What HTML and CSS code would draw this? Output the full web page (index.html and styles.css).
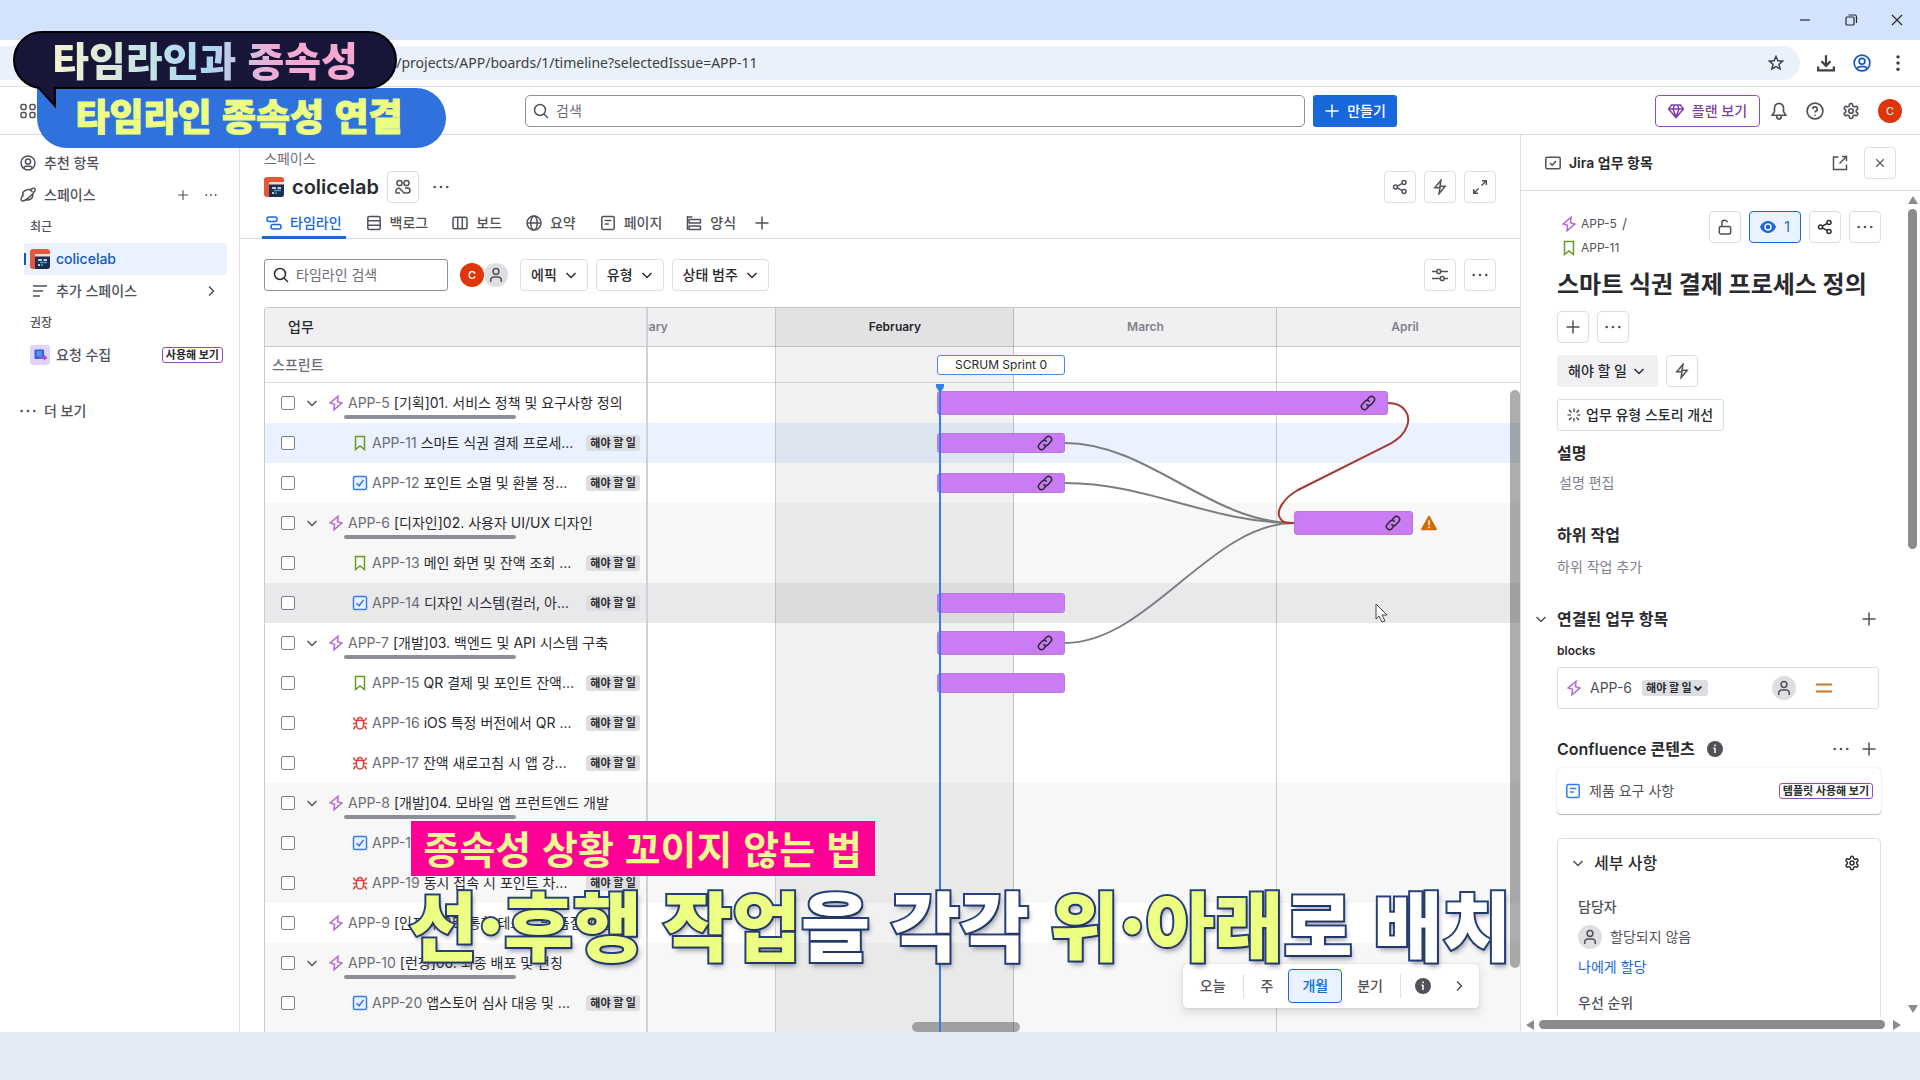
FILE: index.html
```html
<!DOCTYPE html>
<html lang="ko">

<head>
  <meta charset="UTF-8">
  <title>타임라인 - colicelab</title>
  <link rel="stylesheet" href="styles.css">
</head>

<body>
  <!-- icon sprite -->
  <svg class="sprite" aria-hidden="true">
    <symbol id="i-apps" viewBox="0 0 16 16"><rect x="1" y="1.500" width="5" height="5" rx="1.500"/><rect x="10" y="1.500" width="5" height="5" rx="1.500"/><rect x="1" y="9.500" width="5" height="5" rx="1.500"/><rect x="10" y="9.500" width="5" height="5" rx="1.500"/></symbol>
    <symbol id="i-search" viewBox="0 0 16 16"><circle cx="7" cy="7" r="5.500"/><path d="M11 11l4 4"/></symbol>
    <symbol id="i-plus" viewBox="0 0 16 16"><path d="M8 1.500v13M1.500 8h13"/></symbol>
    <symbol id="i-more" viewBox="0 0 16 16"><g fill="currentColor" stroke="none"><circle cx="1.700" cy="8" r="1.300"/><circle cx="8" cy="8" r="1.300"/><circle cx="14.300" cy="8" r="1.300"/></g></symbol>
    <symbol id="i-down" viewBox="0 0 16 16"><path d="M3.500 6L8 10.500 12.500 6"/></symbol>
    <symbol id="i-right" viewBox="0 0 16 16"><path d="M6 3.500L10.500 8 6 12.500"/></symbol>
    <symbol id="i-close" viewBox="0 0 16 16"><path d="M3 3l10 10M13 3L3 13"/></symbol>
    <symbol id="i-bolt" viewBox="0 0 16 16"><path d="M10 1.200L2.200 8l4.300 1.200-.5 5.600L13.800 8 9.500 6.800z"/></symbol>
    <symbol id="i-auto" viewBox="0 0 16 16"><path d="M9 1.200L2.800 8.800H8L7 14.800l6.200-7.600H8z"/></symbol>
    <symbol id="i-story" viewBox="0 0 16 16"><path d="M3.500 1.500h9v13L8 11l-4.500 3.500z"/></symbol>
    <symbol id="i-task" viewBox="0 0 16 16"><rect x="1.500" y="1.500" width="13" height="13" rx="1.500" fill="#e9f2fe"/><path d="M4.500 8.300L7 10.800 11.500 5"/></symbol>
    <symbol id="i-bug" viewBox="0 0 16 16"><path d="M4.500 5.500h7V10a3.500 4 0 0 1-7 0zM5.500 5.500a2.500 3 0 0 1 5 0M1 8.500h3.500M11.500 8.500H15M1.500 2.500l1 2 2 1.500M14.500 2.500l-1 2-2 1.500M1.500 14.500l1-2.500 2.200-1M14.500 14.500l-1-2.500-2.200-1"/></symbol>
    <symbol id="i-link" viewBox="0 0 24 24"><path stroke-width="2.200" d="M9.500 14a5 5 0 0 0 7 .5l4-4.500a4.500 4.500 0 0 0-6.500-6.500L10.500 7.500M14.500 10a5 5 0 0 0-7-.5l-4 4.500a4.500 4.500 0 0 0 6.500 6.500l3.500-4"/></symbol>
    <symbol id="i-user" viewBox="0 0 16 16"><circle cx="8" cy="4.500" r="2.900"/><path d="M2.700 15v-2a3 3 0 0 1 3-3h4.600a3 3 0 0 1 3 3v2"/></symbol>
    <symbol id="i-account" viewBox="0 0 16 16"><circle cx="8" cy="8" r="7"/><circle cx="8" cy="6.500" r="2.600"/><path d="M3.500 13a3 3 0 0 1 2.500-1.800h4a3 3 0 0 1 2.500 1.800"/></symbol>
    <symbol id="i-planet" viewBox="0 0 16 16"><path d="M3 9.500a5.300 5.300 0 0 1 9.500-4.500M13 7.500a5.300 5.300 0 0 1-7.500 5M3.500 7.500C1.500 10 .5 12.500 1.500 13.500 3 15 7.500 12 11 8.500S16 2.500 14.800 1.500c-.8-.8-2.600 0-4.300 1"/></symbol>
    <symbol id="i-lines" viewBox="0 0 16 16"><path d="M1 3h14M1 8h10M1 13h7"/></symbol>
    <symbol id="i-people" viewBox="0 0 16 16"><circle cx="4.500" cy="4" r="2.600"/><circle cx="11.500" cy="4" r="2.600"/><path d="M1 14V11.500a2.500 2.500 0 0 1 4.500-1.200L9 14h3.500a2.500 2.500 0 0 0 0-5H10M1 14h4"/></symbol>
    <symbol id="i-timeline" viewBox="0 0 16 16"><rect x="1" y="2" width="10" height="4.500" rx="2"/><rect x="5" y="9.500" width="10" height="4.500" rx="2"/></symbol>
    <symbol id="i-backlog" viewBox="0 0 16 16"><rect x="1.800" y="1.500" width="12.400" height="13" rx="1.500"/><path d="M2 5.800h12M2 10.200h12"/></symbol>
    <symbol id="i-board" viewBox="0 0 16 16"><rect x="1" y="2.200" width="14" height="11.600" rx="1.500"/><path d="M5.700 2.500v11M10.300 2.500v11"/></symbol>
    <symbol id="i-globe" viewBox="0 0 16 16"><circle cx="8" cy="8" r="7"/><ellipse cx="8" cy="8" rx="3.200" ry="7"/><path d="M1 8h14"/></symbol>
    <symbol id="i-page" viewBox="0 0 16 16"><rect x="1.800" y="1.500" width="12.400" height="13" rx="1.500"/><path d="M4.800 5.500h6.500M4.800 9h4"/></symbol>
    <symbol id="i-form" viewBox="0 0 16 16"><path d="M1.500 1v14M1.500 2h5"/><rect x="3" y="4.500" width="11.500" height="3.500" rx=".5"/><rect x="3" y="11" width="11.500" height="3.500" rx=".5"/></symbol>
    <symbol id="i-share" viewBox="0 0 16 16"><circle cx="3.500" cy="8" r="2"/><circle cx="12" cy="3.500" r="2"/><circle cx="12" cy="12.500" r="2"/><path d="M5.300 7.100l5-2.700M5.300 8.900l5 2.700"/></symbol>
    <symbol id="i-expand" viewBox="0 0 16 16"><path d="M9.500 6.500L14 2M10 1.700h4.300V6M6.500 9.500L2 14M1.700 10v4.300H6"/></symbol>
    <symbol id="i-sliders" viewBox="0 0 16 16"><path d="M0 4.500h5M9 4.500h7M0 11.500h8M12 11.500h4"/><rect x="5" y="2.500" width="3.500" height="4" rx="1"/><rect x="8.500" y="9.500" width="3.500" height="4" rx="1"/></symbol>
    <symbol id="i-gem" viewBox="0 0 16 16"><path d="M3.500 2h9L15.500 6 8 14.500.5 6zM.5 6h15M5 6l3 8M11 6l-3 8M5 6l1.500-4M11 6L9.500 2"/></symbol>
    <symbol id="i-bell" viewBox="0 0 16 16"><path d="M8 1.200a4 4 0 0 1 4 4V8.500l2 3.300H2L4 8.500V5.200a4 4 0 0 1 4-4zM6 12v1a2 2 0 0 0 4 0v-1"/></symbol>
    <symbol id="i-help" viewBox="0 0 16 16"><circle cx="8" cy="8" r="7"/><path d="M6 6.300a2 2 0 1 1 2.800 1.800c-.6.300-.8.600-.8 1.300M8 11v1.300"/></symbol>
    <symbol id="i-gear" viewBox="0 0 24 24"><path stroke-width="2.200" d="M12.220 2h-.44a2 2 0 0 0-2 2v.18a2 2 0 0 1-1 1.730l-.43.25a2 2 0 0 1-2 0l-.15-.08a2 2 0 0 0-2.730.73l-.22.38a2 2 0 0 0 .73 2.730l.15.1a2 2 0 0 1 1 1.720v.51a2 2 0 0 1-1 1.740l-.15.09a2 2 0 0 0-.73 2.730l.22.38a2 2 0 0 0 2.730.73l.15-.08a2 2 0 0 1 2 0l.43.25a2 2 0 0 1 1 1.730V20a2 2 0 0 0 2 2h.44a2 2 0 0 0 2-2v-.18a2 2 0 0 1 1-1.730l.43-.25a2 2 0 0 1 2 0l.15.08a2 2 0 0 0 2.730-.73l.22-.39a2 2 0 0 0-.73-2.730l-.15-.08a2 2 0 0 1-1-1.740v-.5a2 2 0 0 1 1-1.740l.15-.09a2 2 0 0 0 .73-2.730l-.22-.38a2 2 0 0 0-2.730-.73l-.15.08a2 2 0 0 1-2 0l-.43-.25a2 2 0 0 1-1-1.730V4a2 2 0 0 0-2-2z"/><circle cx="12" cy="12" r="3" stroke-width="2.200"/></symbol>
    <symbol id="i-item" viewBox="0 0 16 16"><rect x=".8" y="2.200" width="14.400" height="11.600" rx="1.500"/><path d="M5 8l2.200 2.200L11 6"/></symbol>
    <symbol id="i-external" viewBox="0 0 16 16"><path d="M6.500 2h-5v12.500h13v-5M10 1.500h4.500V6M14.500 1.500L7.500 8.500"/></symbol>
    <symbol id="i-lock" viewBox="0 0 16 16"><rect x="2.300" y="7.500" width="11.400" height="7.500" rx="1.500"/><path d="M4.800 7.500V4a2.900 2.900 0 0 1 5.700-.7"/></symbol>
    <symbol id="i-eye" viewBox="0 0 16 16"><path fill="currentColor" stroke="none" d="M8 2C4.500 2 1.500 4.500 0 8c1.500 3.500 4.500 6 8 6s6.500-2.500 8-6c-1.500-3.500-4.500-6-8-6z"/><circle cx="8" cy="8" r="3" stroke="#e9f2fe"/></symbol>
    <symbol id="i-sparkle" viewBox="0 0 16 16"><path stroke-width="1.200" d="M8 1.500V5M8 11v3.500M1.500 8H5M11 8h3.500M3 3l2.500 2.500M10.500 10.500L13 13M13 3l-2.500 2.500M5.500 10.500L3 13"/></symbol>
    <symbol id="i-info" viewBox="0 0 16 16"><circle cx="8" cy="8" r="8" fill="currentColor" stroke="none"/><path stroke="#fff" d="M8 7v5M6.500 7.300H8M8 3.500v1.800"/></symbol>
    <symbol id="i-warn" viewBox="0 0 16 16"><path fill="#d36a05" stroke="none" d="M8 .8c.5 0 .8.200 1 .6l6.800 12.400c.3.700-.1 1.500-.9 1.500H1.100c-.8 0-1.200-.8-.9-1.500L7 1.400c.2-.4.5-.6 1-.6z"/><path stroke="#fff" d="M8 5.500v4.500M8 11.500v1.700"/></symbol>
    <symbol id="i-star" viewBox="0 0 16 16"><path d="M8 1.500l1.900 4.300 4.700.4-3.600 3.100 1.100 4.600L8 11.500l-4.100 2.400L5 9.300 1.400 6.200l4.700-.4z"/></symbol>
    <symbol id="i-download" viewBox="0 0 16 16"><path stroke-width="2" d="M8 1v9M4 6.500l4 4 4-4M1 11v3.500h14V11"/></symbol>
    <symbol id="i-dots" viewBox="0 0 16 16"><g fill="currentColor" stroke="none"><circle cx="8" cy="2.500" r="1.500"/><circle cx="8" cy="8" r="1.500"/><circle cx="8" cy="13.500" r="1.500"/></g></symbol>
    <symbol id="i-min" viewBox="0 0 16 16"><path d="M3 8h10"/></symbol>
    <symbol id="i-restore" viewBox="0 0 16 16"><rect x="3" y="5" width="8" height="8" rx="1"/><path d="M5.500 3h6a2 2 0 0 1 2 2v6"/></symbol>
    <symbol id="i-logo" viewBox="0 0 20 20"><g stroke="none"><rect width="20" height="20" rx="3" fill="#e5573d"/><path d="M5 5h15v12a3 3 0 0 1-3 3H5z" fill="#1d2f4f"/><path d="M5 5h15v2.500H5z" fill="#f6d9d3"/></g><path d="M8 11h4M13.500 11H17M8 16h2" stroke="#fff"/><path d="M10 13.500h7M11 16h2" stroke="#3aa5d8"/></symbol>
    <symbol id="i-request" viewBox="0 0 20 20"><g stroke="none"><rect width="20" height="20" rx="3" fill="#dfd3f8"/><rect x="4.500" y="4.500" width="9.500" height="9.500" rx="1" fill="#2464dd"/><rect x="6.500" y="6" width="5.500" height="5.500" fill="#5b8df0"/><path d="M9 11.500h5V9.800l3.500 3-3.500 3V14H9z" fill="#a04fd0"/></g></symbol>
  </svg>

  <div class="window">
    <div class="titlebar">
      <button aria-label="최소화"><svg class="icon"><use href="#i-min"/></svg></button>
      <button aria-label="복원"><svg class="icon"><use href="#i-restore"/></svg></button>
      <button aria-label="닫기"><svg class="icon"><use href="#i-close"/></svg></button>
    </div>

    <div class="browserbar">
      <div class="address">
        <input type="text" aria-label="주소" value="software/projects/APP/boards/1/timeline?selectedIssue=APP-11">
        <svg class="icon"><use href="#i-star"/></svg>
      </div>
      <svg class="icon i18"><use href="#i-download"/></svg>
      <svg class="icon i18 blue"><use href="#i-account"/></svg>
      <svg class="icon i18"><use href="#i-dots"/></svg>
    </div>

    <header class="topnav">
      <div class="topnav-left"><svg class="icon"><use href="#i-apps"/></svg></div>
      <div class="searchbox">
        <svg class="icon"><use href="#i-search"/></svg>
        <input type="text" aria-label="검색" placeholder="검색">
      </div>
      <button class="create"><svg class="icon"><use href="#i-plus"/></svg>만들기</button>
      <div class="topnav-right">
        <button class="plan"><svg class="icon"><use href="#i-gem"/></svg>플랜 보기</button>
        <svg class="icon i18"><use href="#i-bell"/></svg>
        <svg class="icon i18"><use href="#i-help"/></svg>
        <svg class="icon i18"><use href="#i-gear"/></svg>
        <span class="avatar red">C</span>
      </div>
    </header>

    <div class="content">
      <nav class="sidebar">
        <a href="#" class="side-item"><svg class="icon"><use href="#i-account"/></svg><span>추천 항목</span></a>
        <div class="side-item"><svg class="icon"><use href="#i-planet"/></svg><span>스페이스</span><svg class="icon i12"><use href="#i-plus"/></svg><svg class="icon i12"><use href="#i-more"/></svg></div>
        <div class="side-label">최근</div>
        <a href="#" class="side-item sub active"><svg class="icon i20"><use href="#i-logo"/></svg><span>colicelab</span></a>
        <a href="#" class="side-item sub"><svg class="icon i20 pad"><use href="#i-lines"/></svg><span>추가 스페이스</span><svg class="icon"><use href="#i-right"/></svg></a>
        <div class="side-label">권장</div>
        <a href="#" class="side-item sub"><svg class="icon i20"><use href="#i-request"/></svg><span>요청 수집</span><span class="try">사용해 보기</span></a>
        <a href="#" class="side-item last"><svg class="icon"><use href="#i-more"/></svg><span>더 보기</span></a>
      </nav>

      <main class="main">
        <a href="#" class="crumb">스페이스</a>
        <div class="title-row">
          <svg class="icon i20"><use href="#i-logo"/></svg>
          <h1>colicelab</h1>
          <button class="sq" aria-label="팀"><svg class="icon"><use href="#i-people"/></svg></button>
          <button class="sq plain" aria-label="더 보기"><svg class="icon"><use href="#i-more"/></svg></button>
          <span class="grow"></span>
          <button class="sq" aria-label="공유"><svg class="icon"><use href="#i-share"/></svg></button>
          <button class="sq" aria-label="자동화"><svg class="icon"><use href="#i-auto"/></svg></button>
          <button class="sq" aria-label="전체 화면"><svg class="icon"><use href="#i-expand"/></svg></button>
        </div>
        <div class="tabs">
          <a href="#" class="tab active"><svg class="icon"><use href="#i-timeline"/></svg>타임라인</a>
          <a href="#" class="tab"><svg class="icon"><use href="#i-backlog"/></svg>백로그</a>
          <a href="#" class="tab"><svg class="icon"><use href="#i-board"/></svg>보드</a>
          <a href="#" class="tab"><svg class="icon"><use href="#i-globe"/></svg>요약</a>
          <a href="#" class="tab"><svg class="icon"><use href="#i-page"/></svg>페이지</a>
          <a href="#" class="tab"><svg class="icon"><use href="#i-form"/></svg>양식</a>
          <a href="#" class="tab add" aria-label="추가"><svg class="icon"><use href="#i-plus"/></svg></a>
        </div>
        <div class="toolbar">
          <div class="filter">
            <svg class="icon"><use href="#i-search"/></svg>
            <input type="text" aria-label="타임라인 검색" placeholder="타임라인 검색">
          </div>
          <div class="people"><span class="avatar red">C</span><span class="avatar"><svg class="icon"><use href="#i-user"/></svg></span></div>
          <button class="drop">에픽<svg class="icon"><use href="#i-down"/></svg></button>
          <button class="drop">유형<svg class="icon"><use href="#i-down"/></svg></button>
          <button class="drop">상태 범주<svg class="icon"><use href="#i-down"/></svg></button>
          <span class="grow"></span>
          <button class="sq" aria-label="보기 설정"><svg class="icon"><use href="#i-sliders"/></svg></button>
          <button class="sq" aria-label="더 보기"><svg class="icon"><use href="#i-more"/></svg></button>
        </div>

        <div class="timeline">
          <table>
            <thead>
              <tr class="months-row">
                <th class="name-col">업무</th>
                <th class="track"><div class="months"><span class="jan">January</span><span class="feb">February</span><span class="mar">March</span><span class="apr">April</span></div></th>
              </tr>
              <tr class="sprint-row">
                <th class="name-col">스프린트</th>
                <td class="track"><button class="sprint" style="margin-left: 289px; width: 128px">SCRUM Sprint 0</button></td>
              </tr>
            </thead>
            <tbody>
              <tr>
                <td><div class="work"><input type="checkbox" aria-label="APP-5"><svg class="icon chev"><use href="#i-down"/></svg><svg class="icon epic"><use href="#i-bolt"/></svg><a href="#">APP-5</a> [기획]01. 서비스 정책 및 요구사항 정의<i></i></div></td>
                <td class="track"><div class="bar tall" style="margin-left: 289px; width: 451px"><svg class="icon"><use href="#i-link"/></svg></div></td>
              </tr>
              <tr class="selected">
                <td><div class="work child"><input type="checkbox" aria-label="APP-11"><svg class="icon story"><use href="#i-story"/></svg><a href="#">APP-11</a> 스마트 식권 결제 프로세...<b>해야 할 일</b></div></td>
                <td class="track"><div class="bar" style="margin-left: 289px; width: 128px"><svg class="icon"><use href="#i-link"/></svg></div></td>
              </tr>
              <tr>
                <td><div class="work child"><input type="checkbox" aria-label="APP-12"><svg class="icon task"><use href="#i-task"/></svg><a href="#">APP-12</a> 포인트 소멸 및 환불 정...<b>해야 할 일</b></div></td>
                <td class="track"><div class="bar" style="margin-left: 289px; width: 128px"><svg class="icon"><use href="#i-link"/></svg></div></td>
              </tr>
              <tr class="alt">
                <td><div class="work"><input type="checkbox" aria-label="APP-6"><svg class="icon chev"><use href="#i-down"/></svg><svg class="icon epic"><use href="#i-bolt"/></svg><a href="#">APP-6</a> [디자인]02. 사용자 UI/UX 디자인<i></i></div></td>
                <td class="track"><div class="bar-line"><div class="bar tall" style="margin-left: 646px; width: 119px"><svg class="icon"><use href="#i-link"/></svg></div><svg class="icon"><use href="#i-warn"/></svg></div></td>
              </tr>
              <tr class="alt">
                <td><div class="work child"><input type="checkbox" aria-label="APP-13"><svg class="icon story"><use href="#i-story"/></svg><a href="#">APP-13</a> 메인 화면 및 잔액 조회 ...<b>해야 할 일</b></div></td>
                <td class="track"></td>
              </tr>
              <tr class="hover">
                <td><div class="work child"><input type="checkbox" aria-label="APP-14"><svg class="icon task"><use href="#i-task"/></svg><a href="#">APP-14</a> 디자인 시스템(컬러, 아...<b>해야 할 일</b></div></td>
                <td class="track"><div class="bar" style="margin-left: 289px; width: 128px"></div></td>
              </tr>
              <tr>
                <td><div class="work"><input type="checkbox" aria-label="APP-7"><svg class="icon chev"><use href="#i-down"/></svg><svg class="icon epic"><use href="#i-bolt"/></svg><a href="#">APP-7</a> [개발]03. 백엔드 및 API 시스템 구축<i></i></div></td>
                <td class="track"><div class="bar tall" style="margin-left: 289px; width: 128px"><svg class="icon"><use href="#i-link"/></svg></div></td>
              </tr>
              <tr>
                <td><div class="work child"><input type="checkbox" aria-label="APP-15"><svg class="icon story"><use href="#i-story"/></svg><a href="#">APP-15</a> QR 결제 및 포인트 잔액...<b>해야 할 일</b></div></td>
                <td class="track"><div class="bar" style="margin-left: 289px; width: 128px"></div></td>
              </tr>
              <tr>
                <td><div class="work child"><input type="checkbox" aria-label="APP-16"><svg class="icon bug"><use href="#i-bug"/></svg><a href="#">APP-16</a> iOS 특정 버전에서 QR ...<b>해야 할 일</b></div></td>
                <td class="track"></td>
              </tr>
              <tr>
                <td><div class="work child"><input type="checkbox" aria-label="APP-17"><svg class="icon bug"><use href="#i-bug"/></svg><a href="#">APP-17</a> 잔액 새로고침 시 앱 강...<b>해야 할 일</b></div></td>
                <td class="track"></td>
              </tr>
              <tr class="alt">
                <td><div class="work"><input type="checkbox" aria-label="APP-8"><svg class="icon chev"><use href="#i-down"/></svg><svg class="icon epic"><use href="#i-bolt"/></svg><a href="#">APP-8</a> [개발]04. 모바일 앱 프런트엔드 개발<i></i></div></td>
                <td class="track"></td>
              </tr>
              <tr class="alt">
                <td><div class="work child"><input type="checkbox" aria-label="APP-18"><svg class="icon task"><use href="#i-task"/></svg><a href="#">APP-18</a> 앱 화면 개발<b>해야 할 일</b></div></td>
                <td class="track"></td>
              </tr>
              <tr class="alt">
                <td><div class="work child"><input type="checkbox" aria-label="APP-19"><svg class="icon bug"><use href="#i-bug"/></svg><a href="#">APP-19</a> 동시 접속 시 포인트 차...<b>해야 할 일</b></div></td>
                <td class="track"></td>
              </tr>
              <tr>
                <td><div class="work leaf"><input type="checkbox" aria-label="APP-9"><svg class="icon epic"><use href="#i-bolt"/></svg><a href="#">APP-9</a> [인프라]05. 통합 테스트 및 품질 개선...</div></td>
                <td class="track"></td>
              </tr>
              <tr class="alt">
                <td><div class="work"><input type="checkbox" aria-label="APP-10"><svg class="icon chev"><use href="#i-down"/></svg><svg class="icon epic"><use href="#i-bolt"/></svg><a href="#">APP-10</a> [런칭]06. 최종 배포 및 런칭<i></i></div></td>
                <td class="track"></td>
              </tr>
              <tr class="alt">
                <td><div class="work child"><input type="checkbox" aria-label="APP-20"><svg class="icon task"><use href="#i-task"/></svg><a href="#">APP-20</a> 앱스토어 심사 대응 및 ...<b>해야 할 일</b></div></td>
                <td class="track"></td>
              </tr>
            </tbody>
          </table>

          <!-- month columns, today marker and dependency lines, over the rows -->
          <div class="columns"><span class="jan"></span><span class="feb"></span><span class="mar"></span></div>
          <svg class="links" width="872" height="726" viewBox="0 0 872 726">
            <g fill="none" stroke="#7d7e82" stroke-width="2">
              <path d="M417 135C500 135 563 215 646 215"/>
              <path d="M417 175C500 175 563 215 646 215"/>
              <path d="M417 335C500 335 563 215 646 215"/>
            </g>
            <path d="M740 95C757 95 763 108 759 118C756 127 750 131 742 136L650 182C634 191 628 204 632 210C635 216 640 215 646 215" fill="none" stroke="#a53a33" stroke-width="2"/>
            <path d="M292 76v650" stroke="#357de8" stroke-width="2"/>
            <path d="M288 76h8v3l-4 6-4-6z" fill="#357de8"/>
            <path d="M728 296v15l3-3 3 6 3-1-3-6h5z" fill="#fff" stroke="#444"/>
          </svg>
          <div class="vthumb"></div>
          <div class="hthumb"></div>

          <div class="scale">
            <button>오늘</button>
            <hr>
            <button>주</button>
            <button class="on">개월</button>
            <button>분기</button>
            <hr>
            <button aria-label="범례"><svg class="icon"><use href="#i-info"/></svg></button>
            <button aria-label="다음"><svg class="icon"><use href="#i-right"/></svg></button>
          </div>
        </div>
      </main>

      <aside class="panel">
        <div class="panel-head">
          <svg class="icon"><use href="#i-item"/></svg>
          <strong>Jira 업무 항목</strong>
          <span class="grow"></span>
          <svg class="icon"><use href="#i-external"/></svg>
          <button class="sq" aria-label="닫기"><svg class="icon i12"><use href="#i-close"/></svg></button>
        </div>
        <div class="panel-body">
          <div class="panel-scroll">
            <div class="issue-top">
              <div class="path">
                <div><svg class="icon epic"><use href="#i-bolt"/></svg><a href="#">APP-5</a><em>/</em></div>
                <div><svg class="icon story"><use href="#i-story"/></svg><a href="#">APP-11</a></div>
              </div>
              <button class="sq" aria-label="제한"><svg class="icon"><use href="#i-lock"/></svg></button>
              <button class="watch"><svg class="icon"><use href="#i-eye"/></svg>1</button>
              <button class="sq dark" aria-label="공유"><svg class="icon"><use href="#i-share"/></svg></button>
              <button class="sq" aria-label="더 보기"><svg class="icon"><use href="#i-more"/></svg></button>
            </div>
            <h2 class="issue-title">스마트 식권 결제 프로세스 정의</h2>
            <div class="row">
              <button class="sq" aria-label="추가"><svg class="icon"><use href="#i-plus"/></svg></button>
              <button class="sq" aria-label="더 보기"><svg class="icon"><use href="#i-more"/></svg></button>
            </div>
            <div class="row">
              <button class="status">해야 할 일<svg class="icon"><use href="#i-down"/></svg></button>
              <button class="sq" aria-label="자동화"><svg class="icon"><use href="#i-auto"/></svg></button>
            </div>
            <button class="improve"><svg class="icon"><use href="#i-sparkle"/></svg>업무 유형 스토리 개선</button>

            <h3>설명</h3>
            <p class="hint indent">설명 편집</p>
            <h3 class="gap">하위 작업</h3>
            <p class="hint more">하위 작업 추가</p>

            <div class="section gap">
              <svg class="icon fold"><use href="#i-down"/></svg>
              <h3>연결된 업무 항목</h3>
              <svg class="icon"><use href="#i-plus"/></svg>
            </div>
            <h4>blocks</h4>
            <div class="linked">
              <svg class="icon epic"><use href="#i-bolt"/></svg>
              <a href="#">APP-6</a>
              <button class="chip">해야 할 일<svg class="icon"><use href="#i-down"/></svg></button>
              <span class="grow"></span>
              <span class="avatar"><svg class="icon"><use href="#i-user"/></svg></span>
              <svg class="prio" viewBox="0 0 16 16"><path d="M0 4.500h16M0 11.500h16" stroke="#c9742b" stroke-width="2"/></svg>
            </div>

            <div class="section conf">
              <h3>Confluence 콘텐츠</h3>
              <svg class="icon"><use href="#i-info"/></svg>
              <span class="grow"></span>
              <svg class="icon"><use href="#i-more"/></svg>
              <svg class="icon"><use href="#i-plus"/></svg>
            </div>
            <div class="doc">
              <svg class="icon task"><use href="#i-page"/></svg>
              <a href="#">제품 요구 사항</a>
              <span class="try">템플릿 사용해 보기</span>
            </div>

            <div class="details">
              <div class="details-head">
                <svg class="icon"><use href="#i-down"/></svg>
                <h3>세부 사항</h3>
                <svg class="icon dark"><use href="#i-gear"/></svg>
              </div>
              <div class="field">담당자</div>
              <div class="assignee"><span class="avatar"><svg class="icon"><use href="#i-user"/></svg></span>할당되지 않음</div>
              <a href="#" class="assign-me">나에게 할당</a>
              <div class="field">우선 순위</div>
            </div>
          </div>
          <div class="vbar"><svg viewBox="0 0 10 8"><path d="M5 0l5 8H0z"/></svg><span></span><svg viewBox="0 0 10 8"><path d="M0 0h10L5 8z"/></svg></div>
        </div>
        <div class="hbar"><svg viewBox="0 0 8 10"><path d="M8 0v10L0 5z"/></svg><span></span><svg viewBox="0 0 8 10"><path d="M0 0l8 5-8 5z"/></svg></div>
      </aside>
    </div>
    <div class="dock"></div>
  </div>

  <!-- video captions -->
  <div class="banner">
    <div class="banner-top"><span>타임라인과 종속성</span>
      <svg width="20" height="22" viewBox="0 0 20 22"><path d="M1 0l17 19V0" fill="#171638" stroke="#000" stroke-width="2"/></svg>
    </div>
    <div class="banner-sub">타임라인 종속성 연결</div>
  </div>
  <div class="caption">
    <div class="caption-tag">종속성 상황 꼬이지 않는 법</div>
    <div class="caption-text"><em>선·후행 작업</em>을 각각 <em>위·아래</em>로 배치</div>
  </div>
</body>

</html>
```

FILE: styles.css
```css
* {
  box-sizing: border-box;
}

body {
  margin: 0;
  font-family: Inter, "Noto Sans CJK KR", sans-serif;
  font-size: 14px;
  line-height: 20px;
  color: #292a2e;
  background: #fff;
}

h1, h2, h3, h4, p {
  margin: 0;
}

a {
  color: inherit;
  text-decoration: none;
}

button, input {
  font: inherit;
  color: inherit;
}

button {
  display: flex;
  align-items: center;
  justify-content: center;
  padding: 0;
  border: 0;
  background: none;
  white-space: nowrap;
}

.sprite {
  position: absolute;
  width: 0;
  height: 0;
}

.icon {
  flex: none;
  width: 16px;
  height: 16px;
  fill: none;
  stroke: currentColor;
  stroke-width: 1.5;
}

.i12 { width: 12px; height: 12px; }
.i18 { width: 18px; height: 18px; }
.i20 { width: 20px; height: 20px; }
.pad { padding: 2px; }
.blue { color: #1558bc; }
.dark { color: #292a2e; }
.epic { color: #b765dd; }
.story { color: #6a9a23; }
.task { color: #357de8; }
.bug { color: #d04437; }
.grow { flex: 1; }

.avatar {
  display: flex;
  align-items: center;
  justify-content: center;
  flex: none;
  width: 24px;
  height: 24px;
  border-radius: 50%;
  background: #dddee1;
  color: #505258;
  font-size: 11px;
}

.avatar.red {
  background: #de350b;
  color: #fff;
}

/* browser frame */
.window {
  display: flex;
  flex-direction: column;
  height: 100vh;
  overflow: hidden;
}

.titlebar {
  display: flex;
  justify-content: flex-end;
  align-items: center;
  gap: 30px;
  flex: none;
  height: 40px;
  padding-right: 15px;
  background: #d3e2fd;
}

.titlebar .icon {
  stroke-width: 1.2;
}

.browserbar {
  display: flex;
  align-items: center;
  gap: 18px;
  flex: none;
  height: 47px;
  padding-right: 13px;
  border-bottom: 1px solid #dddee1;
  color: #3c4043;
}

.address {
  display: flex;
  align-items: center;
  flex: 1;
  height: 34px;
  margin-right: -1px;
  padding: 0 16px 0 337px;
  border-radius: 0 17px 17px 0;
  background: #ebf1fa;
}

.address input {
  flex: 1;
  border: 0;
  background: none;
  font-family: "Noto Sans", sans-serif;
}

.topnav {
  display: flex;
  align-items: center;
  flex: none;
  height: 48px;
  border-bottom: 1px solid #dddee1;
  color: #505258;
}

.topnav-left, .topnav-right {
  flex: 1 0 0;
  display: flex;
  align-items: center;
}

.topnav-left {
  padding-left: 20px;
}

.topnav-right {
  justify-content: flex-end;
  gap: 18px;
  padding-right: 18px;
}

.searchbox, .filter {
  display: flex;
  align-items: center;
  gap: 7px;
  height: 32px;
  padding: 0 8px;
  border: 1px solid #8c8f97;
  border-radius: 5px;
}

.searchbox {
  width: 780px;
  padding: 0 7px;
}

.searchbox input, .filter input {
  flex: 1;
  min-width: 0;
  border: 0;
  padding: 0;
  background: none;
}

input::placeholder {
  color: #6b6e76;
}

.create {
  gap: 7px;
  width: 84px;
  height: 32px;
  margin-left: 8px;
  border-radius: 3px;
  background: #1868db;
  color: #fff;
  font-weight: 500;
}

.plan {
  gap: 8px;
  width: 105px;
  height: 32px;
  margin-right: -8px;
  border: 1px solid #964ac0;
  border-radius: 4px;
  color: #803fa5;
  font-weight: 500;
}

.content {
  display: flex;
  flex: 1;
  min-height: 0;
}

.dock {
  flex: none;
  height: 48px;
  background: #e3ebf5;
}

/* sidebar */
.sidebar {
  flex: none;
  width: 240px;
  padding: 12px 12px 0;
  border-right: 1px solid #dddee1;
  color: #505258;
}

.side-item {
  display: flex;
  align-items: center;
  gap: 8px;
  height: 32px;
  padding: 0 10px 0 8px;
  border-radius: 3px;
  font-weight: 500;
}

.side-item > span:nth-child(2) {
  flex: 1;
}

.side-item .i12 {
  margin-left: 8px;
}

.side-item.sub {
  position: relative;
  gap: 6px;
  margin-left: 12px;
  padding: 0 8px 0 6px;
}

.side-item.active {
  background: #e9f2fe;
  color: #1558bc;
}

.side-item.active::before {
  content: "";
  position: absolute;
  left: 0;
  top: 10px;
  width: 2px;
  height: 12px;
  background: #1558bc;
}

.side-label {
  height: 32px;
  padding: 6px 18px;
  font-size: 12px;
  font-weight: 500;
}

.side-item.last {
  margin-top: 24px;
}

.side-item.sub .try {
  margin-right: -4px;
}

.try {
  padding: 0 3px;
  border: 1px solid #964ac0;
  border-radius: 3px;
  color: #292a2e;
  font-size: 11px;
  line-height: 14px;
  font-weight: 700;
}

/* main */
.main {
  display: flex;
  flex-direction: column;
  flex: 1;
  min-width: 0;
  padding-top: 14px;
}

.crumb {
  padding-left: 24px;
  color: #6b6e76;
}

.title-row, .toolbar {
  display: flex;
  align-items: center;
  gap: 8px;
  padding: 0 24px;
}

.title-row {
  height: 36px;
}

h1 {
  font-size: 20px;
  line-height: 24px;
  font-weight: 600;
}

.sq {
  flex: none;
  width: 32px;
  height: 32px;
  border: 1px solid #dddee1;
  border-radius: 4px;
  color: #505258;
}

.sq.plain {
  margin-left: -2px;
  border: 0;
}

.sq.dark {
  color: #292a2e;
}

.tabs {
  display: flex;
  gap: 16px;
  height: 34px;
  padding-left: 22px;
  border-bottom: 1px solid #dddee1;
  color: #505258;
  font-weight: 500;
}

.tab {
  display: flex;
  align-items: center;
  gap: 8px;
  height: 34px;
  padding: 2px 4px 0;
}

.tab.active {
  border-bottom: 3px solid #1868db;
  padding-top: 4px;
  color: #1868db;
}

.tab.add {
  margin-left: -6px;
}

.toolbar {
  height: 32px;
  margin: 20px 0 16px;
  font-weight: 500;
}

.filter {
  width: 184px;
  border-radius: 3px;
  font-weight: 400;
}

.people {
  display: flex;
  margin: 0 4px;
}

.drop {
  gap: 6px;
  height: 32px;
  padding: 0 8px 0 10px;
  border: 1px solid #dddee1;
  border-radius: 4px;
}

/* timeline */
.timeline {
  position: relative;
  flex: 1;
  min-height: 0;
  margin-left: 24px;
  overflow: hidden;
  border: 1px solid #c9cacd;
  border-width: 1px 0 0 1px;
  border-radius: 4px 0 0;
  background: #f7f7f8;
}

table {
  width: 100%;
  table-layout: fixed;
  border-collapse: separate;
  border-spacing: 0;
}

td, th {
  padding: 0;
  text-align: left;
}

.name-col {
  width: 383px;
}

.months-row th {
  height: 39px;
  border-bottom: 1px solid #c9cacd;
  background: #f0f0f2;
  font-weight: 500;
}

.months-row .name-col {
  padding-left: 23px;
}

.sprint-row > * {
  height: 36px;
  border-bottom: 1px solid #dddee1;
  background: #fff;
}

.sprint-row .name-col {
  padding-left: 7px;
  color: #6b6e76;
  font-weight: 500;
}

.track {
  overflow: hidden;
}

.months, .columns {
  display: flex;
}

.months span {
  flex: none;
  text-align: center;
  font-size: 12px;
  font-weight: 600;
  color: #7d818a;
}

.months .feb {
  color: #292a2e;
}

.jan { width: 264px; margin-left: -136px; }
.feb { width: 238px; }
.mar { width: 263px; }
.apr { width: 256px; }

.columns {
  position: absolute;
  top: 0;
  bottom: 0;
  left: 381px;
  border-left: 2px solid #d0d1d4;
  pointer-events: none;
}

.columns span {
  flex: none;
  border-right: 1px solid rgba(11, 18, 14, 0.2);
}

.columns .feb {
  background: rgba(11, 18, 14, 0.06);
}

tbody td {
  height: 40px;
  background: #fff;
}

tr.alt td { background: #f7f7f8; }
tr.selected td { background: #e9f2fe; }
tr.hover td { background: #e9e9eb; }

.work {
  position: relative;
  display: flex;
  align-items: center;
  height: 40px;
  padding-right: 8px;
  white-space: pre;
}

.work a {
  color: #6b6e76;
}

input[type="checkbox"] {
  flex: none;
  appearance: none;
  width: 14px;
  height: 14px;
  margin: 0 9px 0 16px;
  border: 1px solid #7d818a;
  border-radius: 2px;
  background: #fff;
}

.work .icon {
  margin-right: 4px;
}

.work .chev {
  margin-right: 8px;
  color: #505258;
}

.work.leaf .epic {
  margin-left: 24px;
}

.work.child > .icon {
  margin-left: 48px;
}

.work i {
  position: absolute;
  left: 79px;
  bottom: 4px;
  width: 172px;
  height: 4px;
  border-radius: 2px;
  background: #8c8f97;
}

.work b {
  margin-left: auto;
  padding: 0 4px;
  border-radius: 3px;
  background: #dddee1;
  font-size: 11px;
  line-height: 16px;
}

.bar {
  position: relative;
  z-index: 1;
  display: flex;
  align-items: center;
  justify-content: flex-end;
  height: 20px;
  padding-right: 11px;
  border: 1px solid #b878dc;
  border-radius: 3px;
  background: #c97cf4;
}

.bar.tall {
  height: 24px;
}

.bar-line {
  display: flex;
  align-items: center;
  gap: 8px;
}

.sprint {
  position: relative;
  z-index: 1;
  height: 20px;
  border: 1px solid #4688ec;
  border-radius: 3px;
  background: #fff;
  font-size: 12px;
}

.links {
  position: absolute;
  z-index: 1;
  left: 383px;
  top: 0;
  pointer-events: none;
}

.vthumb, .hthumb {
  position: absolute;
  border-radius: 6px;
  background: rgba(60, 60, 60, 0.42);
}

.vthumb {
  right: 0;
  top: 82px;
  bottom: 64px;
  width: 10px;
}

.hthumb {
  left: 647px;
  bottom: 0;
  width: 108px;
  height: 10px;
}

.scale {
  position: absolute;
  z-index: 1;
  right: 41px;
  bottom: 24px;
  display: flex;
  align-items: center;
  height: 44px;
  padding: 0 2px 0 4px;
  border-radius: 4px;
  background: #fff;
  box-shadow: 0 4px 10px rgba(30, 31, 33, 0.15), 0 0 1px rgba(30, 31, 33, 0.4);
  color: #505258;
  font-weight: 500;
}

.scale button {
  height: 34px;
  padding: 0 13px;
}

.scale .on {
  margin: 0 2px;
  border: 1px solid #1868db;
  border-radius: 4px;
  background: #e9f2fe;
  color: #1868db;
}

.scale hr {
  width: 1px;
  height: 24px;
  margin: 0 4px;
  border: 0;
  background: #dddee1;
}

.scale [aria-label] {
  padding: 0 10px;
}

/* issue panel */
.panel {
  display: flex;
  flex-direction: column;
  flex: none;
  width: 400px;
  border-left: 1px solid #dddee1;
  color: #505258;
}

.panel-head {
  display: flex;
  align-items: center;
  gap: 8px;
  flex: none;
  height: 56px;
  padding: 0 24px;
  border-bottom: 1px solid #dddee1;
}

.panel-head strong {
  color: #292a2e;
  font-weight: 600;
}

.panel-head .sq {
  margin-left: 8px;
}

.panel-body {
  display: flex;
  flex: 1;
  min-height: 0;
}

.panel-scroll {
  flex: 1;
  min-width: 0;
  overflow: hidden;
  padding: 20px 24px 0 36px;
}

.issue-top {
  display: flex;
  gap: 8px;
  height: 60px;
}

.path {
  flex: 1;
  padding: 1px 0 0 4px;
  font-size: 12px;
}

.path div {
  display: flex;
  align-items: center;
  gap: 4px;
  height: 24px;
}

.path em {
  margin-left: 1px;
  font-style: normal;
  font-size: 14px;
}

.watch {
  gap: 8px;
  width: 52px;
  height: 32px;
  border: 1px solid #1868db;
  border-radius: 4px;
  background: #e9f2fe;
  color: #1868db;
}

.issue-title {
  color: #292a2e;
  font-size: 24px;
  line-height: 28px;
  white-space: nowrap;
}

.row {
  display: flex;
  gap: 8px;
  margin-top: 12px;
}

.status {
  gap: 4px;
  width: 101px;
  height: 32px;
  border-radius: 3px;
  background: #f0f0f2;
  color: #292a2e;
  font-weight: 500;
}

.improve {
  gap: 4px;
  height: 32px;
  margin-top: 12px;
  padding: 0 10px 0 8px;
  border: 1px solid #dddee1;
  border-radius: 3px;
  color: #292a2e;
  font-weight: 500;
}

h3 {
  color: #292a2e;
  font-size: 16px;
  line-height: 20px;
  font-weight: 600;
}

.improve + h3 {
  margin-top: 12px;
}

.gap {
  margin-top: 32px;
}

.hint {
  margin-top: 10px;
  color: #7d818a;
}

.hint.more {
  margin-top: 12px;
}

.indent {
  padding-left: 2px;
}

.section {
  display: flex;
  align-items: center;
  gap: 12px;
  padding-right: 4px;
}

.fold {
  margin: 0 -4px 0 -24px;
}

.section .fold + h3 {
  flex: 1;
}

h4 {
  margin: 14px 0 8px;
  color: #292a2e;
  font-size: 12px;
  line-height: 16px;
  font-weight: 600;
}

.linked {
  display: flex;
  align-items: center;
  height: 42px;
  margin-right: 2px;
  padding: 0 46px 0 8px;
  border: 1px solid #dddee1;
  border-radius: 3px;
}

.linked a {
  margin: 0 10px 0 8px;
}

.chip {
  height: 16px;
  padding: 0 4px;
  border-radius: 3px;
  background: #dddee1;
  color: #292a2e;
  font-size: 11px;
  line-height: 16px;
  font-weight: 700;
}

.chip .icon {
  width: 12px;
  height: 12px;
  stroke-width: 2.5;
}

.prio {
  width: 16px;
  height: 16px;
  margin-left: 20px;
}

.conf {
  margin-top: 30px;
}

.doc {
  display: flex;
  align-items: center;
  gap: 8px;
  height: 46px;
  margin-top: 9px;
  padding: 0 8px;
  border-radius: 4px;
  box-shadow: 0 1px 1px rgba(30, 31, 33, 0.3), 0 0 1px rgba(30, 31, 33, 0.3);
}

.doc a {
  flex: 1;
}

.details {
  height: 400px;
  margin-top: 24px;
  padding: 14px 20px;
  border: 1px solid #dddee1;
  border-radius: 5px;
}

.details-head {
  display: flex;
  align-items: center;
  gap: 8px;
  margin-left: -8px;
}

.details-head h3 {
  flex: 1;
  font-weight: 500;
}

.field {
  margin-top: 24px;
  font-weight: 500;
}

.assignee {
  display: flex;
  align-items: center;
  gap: 8px;
  margin: 8px 0;
}

.assign-me {
  color: #1868db;
}

.assign-me + .field {
  margin-top: 16px;
}

.vbar {
  display: flex;
  flex-direction: column;
  align-items: center;
  flex: none;
  width: 15px;
  padding: 5px 0 4px;
}

.vbar svg {
  width: 10px;
  height: 8px;
  fill: #8b8b8b;
}

.vbar span {
  width: 9px;
  height: 340px;
  margin: 5px 0 auto;
  border-radius: 5px;
  background: #8b8b8b;
}

.hbar {
  display: flex;
  align-items: center;
  flex: none;
  height: 15px;
  padding: 0 19px 0 5px;
}

.hbar svg {
  width: 8px;
  height: 10px;
  fill: #8b8b8b;
}

.hbar span {
  flex: 1;
  height: 9px;
  margin: 0 8px 0 5px;
  border-radius: 5px;
  background: #8b8b8b;
}

/* captions laid over the recording */
.banner, .caption {
  position: absolute;
  z-index: 2;
  font-family: "Noto Sans CJK KR", sans-serif;
  font-weight: 900;
  white-space: nowrap;
}

.banner {
  left: 13px;
  top: 31px;
}

.banner-top {
  position: relative;
  width: 384px;
  height: 58px;
  border: 2px solid #000;
  border-radius: 29px;
  background: #171638;
  text-align: center;
  font-size: 40px;
  line-height: 52px;
}

.banner-top span {
  background: linear-gradient(90deg, #f7f3cf, #a9d8f2 50%, #f5a8d0 75%);
  -webkit-background-clip: text;
  background-clip: text;
  color: transparent;
}

.banner-top svg {
  position: absolute;
  left: 22px;
  top: 54px;
}

.banner-sub {
  width: 409px;
  height: 60px;
  margin: -1px 0 0 24px;
  padding-right: 5px;
  border-radius: 0 30px 30px 30px;
  background: #2f72dd;
  color: #ecff83;
  text-align: center;
  font-size: 37px;
  line-height: 55px;
  -webkit-text-stroke: 1px #ecff83;
}

.caption {
  left: 0;
  right: 0;
  bottom: 110px;
  display: grid;
  justify-content: center;
  justify-items: start;
}

.caption-tag {
  height: 55px;
  margin-left: 2px;
  padding: 0 13px;
  background: #ff0096;
  color: #f3f990;
  font-size: 39px;
  line-height: 52px;
  font-weight: 700;
}

.caption-text {
  color: #fff;
  font-size: 75px;
  line-height: 94px;
  -webkit-text-stroke: 4px #26417c;
  paint-order: stroke fill;
  text-shadow: 2px 4px 5px rgba(30, 40, 70, 0.45);
}

.caption-text em {
  color: #ecff83;
  font-style: normal;
}
```
